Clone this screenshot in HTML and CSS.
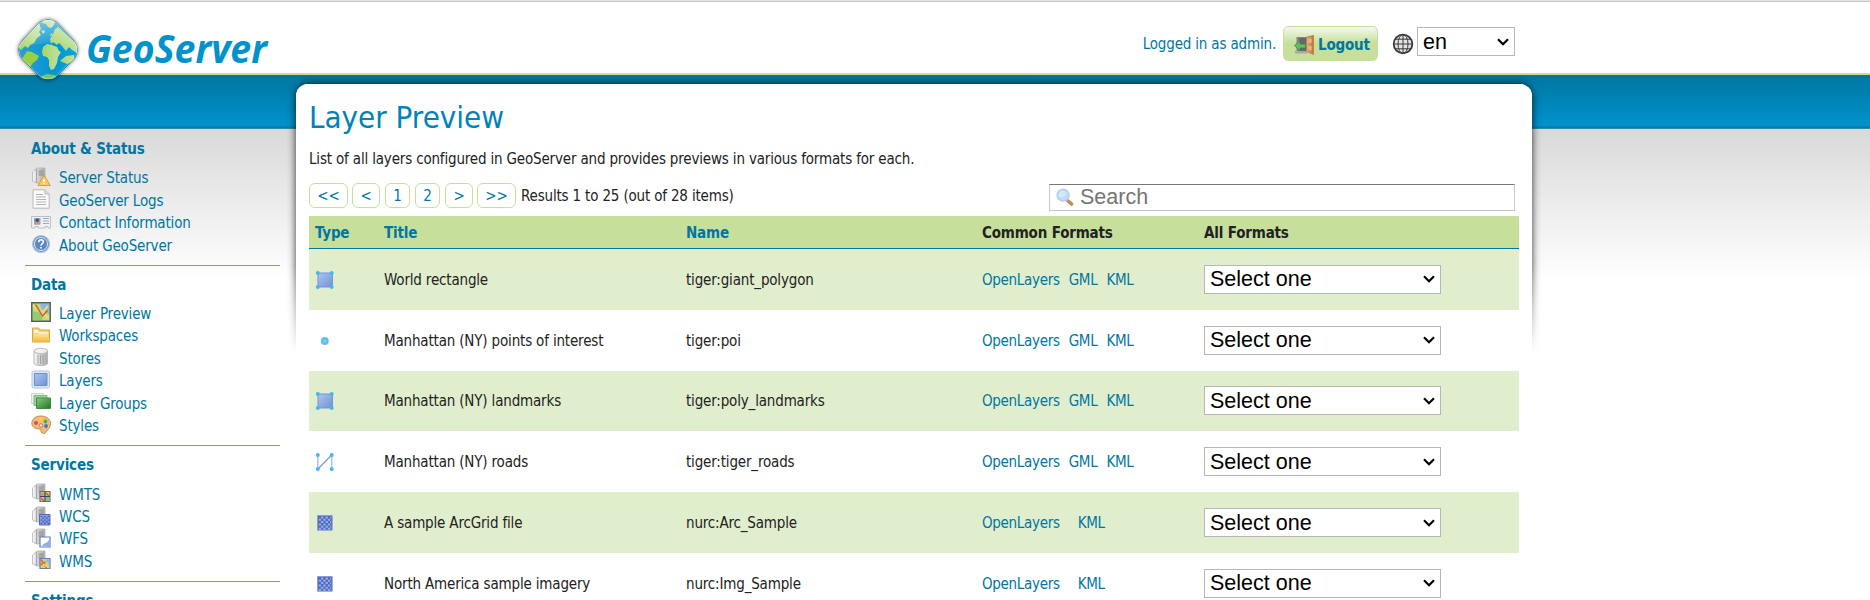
FILE: index.html
```html
<!DOCTYPE html>
<html lang="en">
<head>
<meta charset="utf-8">
<title>GeoServer: Layer Preview</title>
<link rel="stylesheet" href="styles.css">
</head>
<body>
<svg class="defs" width="0" height="0" aria-hidden="true">
  <defs>
    <linearGradient id="gPoly" x1="0" y1="0" x2="1" y2="1"><stop offset="0" stop-color="#abc6ee"/><stop offset="1" stop-color="#6f92d8"/></linearGradient>
    <linearGradient id="gSrv" x1="0" y1="0" x2="1" y2="0"><stop offset="0" stop-color="#fafafa"/><stop offset=".4" stop-color="#d8d8d8"/><stop offset="1" stop-color="#a9a9a9"/></linearGradient>
    <linearGradient id="gGrp" x1="0" y1="0" x2="1" y2="1"><stop offset="0" stop-color="#8cc98a"/><stop offset="1" stop-color="#1f7a1c"/></linearGradient>
    <linearGradient id="gFold" x1="0" y1="0" x2="0" y2="1"><stop offset="0" stop-color="#fdeeb0"/><stop offset="1" stop-color="#f2bd3e"/></linearGradient>
    <linearGradient id="gDoor" x1="0" y1="0" x2="1" y2="0"><stop offset="0" stop-color="#e6b07a"/><stop offset="1" stop-color="#b8733e"/></linearGradient>
    <linearGradient id="gSea" x1="0" y1="0" x2="1" y2="0"><stop offset="0" stop-color="#2f9fd0"/><stop offset=".6" stop-color="#0095d4"/><stop offset="1" stop-color="#00a8e0"/></linearGradient>
    <linearGradient id="gLand" x1="0" y1="0" x2="1" y2="0"><stop offset="0" stop-color="#a8d468"/><stop offset="1" stop-color="#c3e2a0"/></linearGradient>
    <linearGradient id="gGloss" x1="0" y1="0" x2="0" y2="1"><stop offset="0" stop-color="#fff" stop-opacity=".5"/><stop offset="1" stop-color="#fff" stop-opacity="0"/></linearGradient>
    <symbol id="server" viewBox="0 0 20 20"><path d="M1.500 5 6 1h8v15H6l-4.500-2z" fill="url(#gSrv)" stroke="#b3b3b3" stroke-width=".8"/><path d="M5.500 2v14" stroke="#a8a8a8" stroke-width="1.200"/><path d="M7.500 4h5M7.500 6h5M7.500 8h5" stroke="#888"/></symbol>
    <symbol id="status" viewBox="0 0 20 20"><use href="#server"/><path d="M13 8.200 19.200 18.500H7z" fill="#f8cc5c" stroke="#dc9a35" stroke-linejoin="round"/><path d="M13 12v3M13 16v1.200" stroke="#fff" stroke-width="1.500"/></symbol>
    <symbol id="logs" viewBox="0 0 20 20"><path d="M2 .8h12L18.200 5v14.200H2z" fill="#fafafa" stroke="#b8b8b8"/><path d="M14 1v4h4" fill="#ddd" stroke="#bbb"/><path d="M5 5.500h7M5 8h10M5 10.500h10M5 13h10M5 15.500h10" stroke="#b4b4b4"/></symbol>
    <symbol id="card" viewBox="0 0 20 20"><path d="M.6 4.500h19v11.500H17v-1.500h-3V16H7v-1.500H4V16H.6z" fill="#eef2f7" stroke="#b6bfcb"/><path d="M3 6h6.500v6.500H3z" fill="#7ba9dd"/><circle cx="6.200" cy="8.200" r="1.700" fill="#6e4326"/><path d="M3.500 12.500c0-3.500 5.500-3.500 5.500 0z" fill="#e59055"/><path d="M12 6.500h6M12 9h6M12 11.500h6" stroke="#a0a8b3"/></symbol>
    <symbol id="about" viewBox="0 0 20 20"><circle cx="10" cy="10" r="8.500" fill="#6f98cc" stroke="#b0c3df" stroke-width="1.200"/><circle cx="10" cy="10" r="6.500" fill="#5b87bf" stroke="#d9e5f3"/><path d="M7.700 8.200c0-3.500 5-3 4.700-.2C12.200 9.700 10 9.600 10 11.700M10 13v1.600" fill="none" stroke="#fff" stroke-width="1.600"/></symbol>
    <symbol id="preview" viewBox="0 0 20 20"><path d="M.8.800h18.400v18.400H.8z" fill="#bedb86" stroke="#536150" stroke-width="1.500"/><path d="M9 2h9v10L12 9z" fill="#89b3ee"/><path d="M2 9l7 2 3 7H2z" fill="#8fce6b"/><path d="M2 3.500 18 16M11 11l6-7" stroke="#f3dc65" stroke-width="2"/><path d="M4.500 2.500 11.500 14l5-5.500" fill="none" stroke="#e15b3c" stroke-width="1.500"/></symbol>
    <symbol id="folder" viewBox="0 0 20 20"><path d="M1.500 3h6l1.500 2h9.500v12h-17z" fill="#f5d46d" stroke="#dba63c"/><path d="M3 5h4v2h10v1H3z" fill="#fffbe2"/><path d="M3 9h5l1.500-1.500H17V16H3z" fill="url(#gFold)"/></symbol>
    <symbol id="store" viewBox="0 0 20 20"><path d="M3 4v12c0 3.500 13.500 3.500 13.500 0V4z" fill="url(#gSrv)" stroke="#b8b8b8"/><ellipse cx="9.800" cy="4" rx="6.700" ry="2.700" fill="#f1f1f1" stroke="#b8b8b8"/><path d="M7 8v9M9.500 8v9M12 8v9" stroke="#999" stroke-width=".8"/></symbol>
    <symbol id="layer" viewBox="0 0 20 20"><rect x="1" y="1" width="17.500" height="17" rx="1.500" fill="#dbe6f7" stroke="#b4c5e4"/><path d="M3.500 3.500h12.500v12H3.500z" fill="url(#gPoly)" stroke="#6e8ed0"/></symbol>
    <symbol id="group" viewBox="0 0 20 20"><path d="M.5 1.500h12v10H.5z" fill="#e5f4e4" stroke="#c5e0c5"/><path d="M3 3.500h13v10H3z" fill="#9fd09d" stroke="#80ba7e"/><path d="M5.500 6h14v10.500h-14z" fill="url(#gGrp)" stroke="#3c8e39"/></symbol>
    <symbol id="style" viewBox="0 0 20 20"><path d="M10 1c5 0 9.500 3 9.500 7.500S17 14 15 17c-2 3-5 1-5-1 0-3-3-1.500-6-3S.5 9 1 7c.700-3.500 4-6 9-6z" fill="#f0bb83" stroke="#c88849"/><circle cx="5" cy="8" r="2" fill="#e34b37"/><circle cx="10" cy="4.500" r="2" fill="#f9d436"/><circle cx="14.500" cy="6.500" r="1.900" fill="#54ad42"/><circle cx="15" cy="11" r="1.900" fill="#397cc2"/><circle cx="10" cy="10.500" r="1.700" fill="#fff" stroke="#b97940"/></symbol>
    <symbol id="wmts" viewBox="0 0 20 20"><use href="#server"/><path d="M9 8.500h10v10H9z" fill="#e8c75d" stroke="#566fae" stroke-width="1.200"/><path d="M10 9.500h3.500v3.500H10z" fill="#b8a0a0"/><path d="M15 14h3.500v4H15z" fill="#94c456"/><path d="M10 15l3 3M15 10l3 3" stroke="#df5838" stroke-width="1.500"/><path d="M14 8.500v10M9 13.500h10" stroke="#34476d" stroke-width="1.200"/></symbol>
    <symbol id="wcs" viewBox="0 0 20 20"><use href="#server"/><path d="M8.500 8.500h10.500v10.500H8.500z" fill="#8faae8" stroke="#5467bd"/><path d="M9.500 10.500h9M9.500 14h9M9.500 17.300h9" stroke="#4c60bd" stroke-width="1.700" stroke-dasharray="1.800 1.700"/><path d="M11.300 12.200h7M11.300 15.700h7" stroke="#4c60bd" stroke-width="1.700" stroke-dasharray="1.800 1.700"/></symbol>
    <symbol id="wfs" viewBox="0 0 20 20"><use href="#server"/><path d="M9 9h10v10H9z" fill="#fff" stroke="#647dc6" stroke-width="1.200"/><path d="M11 18.400c1-4 4-2 7.400-7v7z" fill="#8eb0e7"/></symbol>
    <symbol id="wms" viewBox="0 0 20 20"><use href="#server"/><path d="M9 8.500h10v10H9z" fill="#cbd77a" stroke="#6b79bd" stroke-width="1.200"/><path d="M14 9.500h4.500v5z" fill="#8fb6ee"/><path d="M10 9.500l6 9M9.500 15l5-3" stroke="#e06a3c" stroke-width="1.600"/><path d="M12 14l6 4" stroke="#f3dc65" stroke-width="1.500"/></symbol>
    <symbol id="polygon" viewBox="0 0 20 20"><path d="M3 3h14.500v14H3z" fill="url(#gPoly)" stroke="#7595d8"/><g fill="#45b6f2"><circle cx="2.800" cy="3" r="2"/><circle cx="16.700" cy="3" r="2"/><circle cx="2.800" cy="17" r="2"/><circle cx="16.700" cy="17" r="2"/></g></symbol>
    <symbol id="point" viewBox="0 0 20 20"><circle cx="9.800" cy="10" r="4" fill="#65c0f2"/><circle cx="9.800" cy="10" r="2" fill="#88d1f7" stroke="#4cafeb" stroke-width=".7"/></symbol>
    <symbol id="line" viewBox="0 0 20 20"><path d="M2.800 3v14L16.700 3v14" fill="none" stroke="#a9c7f0" stroke-width="1.600"/><path d="M3 17 16.700 3" stroke="#6f92d8"/><g fill="#45b6f7"><circle cx="2.800" cy="3" r="2"/><circle cx="16.700" cy="3" r="2"/><circle cx="2.800" cy="17" r="2"/><circle cx="16.700" cy="17" r="2"/></g></symbol>
    <symbol id="raster" viewBox="0 0 20 20"><path d="M2.500 2.500h14.700v14.700H2.500z" fill="#5369bd" stroke="#8e9bd0"/><path d="M6 4.500h10M6 9.100h10M6 13.700h10M3.700 6.800h12M3.700 11.400h12M3.700 15.800h12" stroke="#91b1ea" stroke-width="2" stroke-dasharray="2.300 2.300"/></symbol>
  </defs>
</svg>

<header class="header">
  <a class="logo" href="#">
    <svg width="270" height="90" viewBox="0 0 270 90">
      <defs><clipPath id="diamond"><path d="M40 22q8-5 16 0L74 41q7 9 0 18L56 77q-8 5-16 0L22 59q-7-9 0-18z"/></clipPath></defs>
      <path class="logo-shadow" d="M40 22q8-5 16 0L74 41q7 9 0 18L56 77q-8 5-16 0L22 59q-7-9 0-18z"/>
      <g clip-path="url(#diamond)">
        <path d="M16 16h64v66H16z" fill="url(#gSea)"/>
        <g fill="url(#gLand)">
          <path d="M18 46 39 23l2 6-2 3 2 3-4 3-3 5-4 2-2 3-3-2-4 4z"/>
          <path d="M27 51l5 1 7 4-2 4-4 3-3 4-8-8z" fill="#98cf45"/>
          <path d="M43 20h12l-1 5-3 3-3-1-2-3-4-1z"/>
          <path d="M50 39l3-5 2-5 3-2 20 18-1 8-5-3-3-3-3 4-4-5-3-3-2 2-4-3-2 2z"/>
          <path d="M43 47l4-3 5 1 5 2 2 4 2 1-3 5-1 6-3 6-3 1-2-4v-6l-2-3-4-1-1-4z"/>
          <path d="M60 61l6-5 8-1v6l-7 3z"/>
          <path d="M42 76l5-2 8 1 2 4H40z" fill="#71c56f"/>
        </g>
        <path d="M41 31l3-1 1 2-2 2zM50 36l1-3 2 2z" fill="#b8dd8e"/>
        <path d="M16 16h64v30q-30-8-64 4z" fill="url(#gGloss)"/>
      </g>
      <path d="M40 23q8-5 16 0L74 42q6 8 0 16L56 76q-8 5-16 0L22 58q-6-8 0-16z" fill="none" stroke="#fff" stroke-opacity=".3"/>
      <text class="logo-text" x="86" y="63" textLength="181" lengthAdjust="spacingAndGlyphs">GeoServer</text>
    </svg>
  </a>
  <div class="session">
    <span class="user">Logged in as admin.</span>
    <a class="logout" href="#">
      <svg width="20" height="20" viewBox="0 0 20 20"><path d="M2.500 2h13v14h-13z" fill="#858585"/><path d="M5 3h7v13H5z" fill="#686868"/><path d="M1 16h12v2.500H1z" fill="#aaa"/><path d="M12.500 2 19.500.5v19l-7-3z" fill="url(#gDoor)" stroke="#bb7640" stroke-width=".7"/><path d="M14.300 4l3.300-.7v4.500h-3.300zM14.300 11h3.300v4.500l-3.300-1z" fill="#e8b786"/><path d="M.5 10.500 6 6v3h5.500v4H6v3z" fill="#64bd68" stroke="#36873b" stroke-width=".8"/></svg>
      <span>Logout</span>
    </a>
    <svg class="globe" width="22" height="22" viewBox="0 0 22 22" fill="none" stroke="#3a3a3a"><circle cx="11" cy="11" r="9.300" stroke-width="1.800" fill="#e4e4e4"/><ellipse cx="11" cy="11" rx="5" ry="9.500"/><path d="M11 1.500v19M1.500 11h19M3 6.200h16M3 15.800h16"/></svg>
    <select class="lang" aria-label="Language"><option>en</option></select>
  </div>
</header>

<div class="page">
  <nav class="sidebar">
    <section>
      <h2>About &amp; Status</h2>
      <ul>
        <li><svg><use href="#status"/></svg><a>Server Status</a></li>
        <li><svg><use href="#logs"/></svg><a>GeoServer Logs</a></li>
        <li><svg><use href="#card"/></svg><a>Contact Information</a></li>
        <li><svg><use href="#about"/></svg><a>About GeoServer</a></li>
      </ul>
    </section>
    <section>
      <h2>Data</h2>
      <ul>
        <li><svg><use href="#preview"/></svg><a>Layer Preview</a></li>
        <li><svg><use href="#folder"/></svg><a>Workspaces</a></li>
        <li><svg><use href="#store"/></svg><a>Stores</a></li>
        <li><svg><use href="#layer"/></svg><a>Layers</a></li>
        <li><svg><use href="#group"/></svg><a>Layer Groups</a></li>
        <li><svg><use href="#style"/></svg><a>Styles</a></li>
      </ul>
    </section>
    <section>
      <h2>Services</h2>
      <ul>
        <li><svg><use href="#wmts"/></svg><a>WMTS</a></li>
        <li><svg><use href="#wcs"/></svg><a>WCS</a></li>
        <li><svg><use href="#wfs"/></svg><a>WFS</a></li>
        <li><svg><use href="#wms"/></svg><a>WMS</a></li>
      </ul>
    </section>
    <section>
      <h2>Settings</h2>
    </section>
  </nav>

  <main class="panel">
    <h1>Layer Preview</h1>
    <p class="intro">List of all layers configured in GeoServer and provides previews in various formats for each.</p>
    <div class="toolbar">
      <div class="pager">
        <a class="wide">&lt;&lt;</a><a class="mid">&lt;</a><a>1</a><a>2</a><a class="mid next">&gt;</a><a class="wide last">&gt;&gt;</a>
        <span class="results">Results 1 to 25 (out of 28 items)</span>
      </div>
      <label class="search">
        <svg width="18" height="19" viewBox="0 0 19 20"><path d="M12.500 13.500l4 3.500" stroke="#c78c54" stroke-width="3.600" stroke-linecap="round"/><circle cx="7.500" cy="7.500" r="6.300" fill="#bddcf6" stroke="#b4cdec" stroke-width="1.500"/><circle cx="6.500" cy="6.500" r="3.500" fill="#d3e8fa"/></svg>
        <input type="text" placeholder="Search">
      </label>
    </div>
    <table class="layers">
      <thead><tr><th class="c-type">Type</th><th class="c-title">Title</th><th class="c-name">Name</th><th class="c-common plain">Common Formats</th><th class="plain">All Formats</th></tr></thead>
      <tbody>
        <tr><td><svg><use href="#polygon"/></svg></td><td>World rectangle</td><td>tiger:giant_polygon</td><td><span class="links"><a>OpenLayers</a><a>GML</a><a>KML</a></span></td><td><select><option>Select one</option></select></td></tr>
        <tr><td><svg><use href="#point"/></svg></td><td>Manhattan (NY) points of interest</td><td>tiger:poi</td><td><span class="links"><a>OpenLayers</a><a>GML</a><a>KML</a></span></td><td><select><option>Select one</option></select></td></tr>
        <tr><td><svg><use href="#polygon"/></svg></td><td>Manhattan (NY) landmarks</td><td>tiger:poly_landmarks</td><td><span class="links"><a>OpenLayers</a><a>GML</a><a>KML</a></span></td><td><select><option>Select one</option></select></td></tr>
        <tr><td><svg><use href="#line"/></svg></td><td>Manhattan (NY) roads</td><td>tiger:tiger_roads</td><td><span class="links"><a>OpenLayers</a><a>GML</a><a>KML</a></span></td><td><select><option>Select one</option></select></td></tr>
        <tr><td><svg><use href="#raster"/></svg></td><td>A sample ArcGrid file</td><td>nurc:Arc_Sample</td><td><span class="links raster"><a>OpenLayers</a><a>KML</a></span></td><td><select><option>Select one</option></select></td></tr>
        <tr><td><svg><use href="#raster"/></svg></td><td>North America sample imagery</td><td>nurc:Img_Sample</td><td><span class="links raster"><a>OpenLayers</a><a>KML</a></span></td><td><select><option>Select one</option></select></td></tr>
      </tbody>
    </table>
  </main>
</div>
</body>
</html>
```

FILE: styles.css
```css
* { box-sizing: border-box; }
html, body { margin: 0; height: 600px; overflow: hidden; }
body {
  font: 15px/22px Tahoma, "DejaVu Sans Condensed", "DejaVu Sans", sans-serif;
  font-stretch: condensed;
  letter-spacing: -0.17px;
  color: #222;
  background: #fff;
  display: flex;
  flex-direction: column;
}
.defs { position: absolute; }
a { color: #0076a1; text-decoration: none; }
h1, h2, p, ul { margin: 0; padding: 0; font-weight: normal; }
ul { list-style: none; }
select {
  appearance: none;
  font: 21.500px "Liberation Sans", Arial, sans-serif;
  letter-spacing: 0;
  color: #000;
  background: #fff url("data:image/svg+xml,%3Csvg xmlns='http://www.w3.org/2000/svg' width='12' height='8'%3E%3Cpath d='M1 1.300 6 6.300 11 1.300' fill='none' stroke='%23000' stroke-width='2.200'/%3E%3C/svg%3E") no-repeat right 5px center;
  border: 1px solid #b6b6b6;
  border-radius: 0;
  padding: 0 0 0 5px;
  height: 29px;
}

.header {
  flex: none;
  height: 75px;
  border-top: 1px solid #e6e6e6;
  border-bottom: 2px solid #c6df9b;
  box-shadow: inset 0 1px #c4c4c4;
  display: flex;
  justify-content: space-between;
  padding-right: 355px;
  position: relative;
  z-index: 1;
}
.logo { height: 72px; margin-top: -1px; }
.logo svg { display: block; overflow: visible; }
.logo-shadow { fill: #333; filter: drop-shadow(0 0 2px rgba(0,0,0,.7)); }
.logo-text { font: italic bold 40px "Open Sans", "Noto Sans", sans-serif; letter-spacing: 0; fill: #0092cb; }
.session { display: flex; align-items: flex-start; padding-top: 25px; }
.user { color: #0076a1; padding-top: 7px; margin-right: 7px; }
.logout {
  display: flex; align-items: center; gap: 4px;
  width: 95px; height: 35px; padding: 3px 0 0 10px;
  border: 1px solid #c6df9b; border-radius: 5px;
  background: linear-gradient(#f4f9eb, #c6df9b 50%);
  font-weight: bold;
}
.globe { margin: 7px 3px 0 14px; }
.lang { width: 98px; margin-top: 1px; }

.page {
  flex: 1; min-height: 0;
  display: flex; align-items: flex-start;
  isolation: isolate;
  background:
    linear-gradient(#0076a1, #0092cb 50px, #0092cb 51px, #0076a1 52px, #3f8fac 54px) 0 0 / 100% 54px no-repeat,
    linear-gradient(#d9d9d9, #fff 150px) 0 54px / 100% 160px no-repeat;
}
.sidebar { width: 255px; margin: 63px 16px 0 25px; }
.sidebar section { border-bottom: 1px solid #8b9c78; padding: 0 0 8px 6px; margin-bottom: 8px; }
.sidebar section:last-child { border: 0; }
.sidebar h2 { font-size: 15px; line-height: 22px; font-weight: bold; color: #0076a1; margin-bottom: 7px; }
.sidebar li { display: flex; align-items: center; height: 22.450px; }
.sidebar svg { width: 20px; height: 20px; margin: -3px 8px 0 0; flex: none; }

.panel {
  position: relative;
  width: 1236px; height: 516px; margin-top: 9px;
  padding: 0 13px;
  border-radius: 12px 12px 0 0;
  background: #fff;
}
/* Soft shadow round the top of the panel, fading out down its sides */
.panel::before {
  content: "";
  position: absolute; z-index: -1; inset: -9px -12px auto; height: 281px;
  padding: 9px 12px 0;
  border-radius: 24px 24px 0 0;
  background: rgba(0,0,0,.8) content-box;
  background-clip: content-box;
  filter: blur(4px);
  mask-image: linear-gradient(#000 190px, transparent 278px);
}
.panel::after {
  content: "";
  position: absolute; z-index: -1; inset: 0;
  border-radius: 12px 12px 0 0;
  background: #fff;
}
.panel h1 { font-size: 31px; line-height: 36px; color: #0083b8; padding-top: 15px; letter-spacing: 0; }
.intro { padding-top: 13px; }
.toolbar { display: flex; justify-content: space-between; margin-top: 13px; padding-right: 4px; height: 33px; }
.pager { display: flex; height: 25px; }
.pager a { width: 25px; height: 25px; border: 1px solid #c6df9b; border-radius: 6px; text-align: center; line-height: 25px; margin-right: 5px; }
.pager .mid { width: 28px; }
.pager .next { margin-right: 4px; }
.pager .wide { width: 39px; margin-right: 4px; }
.pager .last { margin-right: 5px; }
.results { line-height: 27px; }
.search { display: flex; align-items: center; width: 466px; height: 27px; margin-top: 1px; border: 1px solid #c8c8c8; border-top-color: #777; padding-left: 6px; }
.search svg { flex: none; }
.search input { border: 0; outline: 0; padding: 0 0 0 6px; font: 21.500px "Liberation Sans", Arial, sans-serif; height: 25px; width: 420px; background: transparent; }
.search input::placeholder { color: #757575; }

.layers { width: 1210px; border-collapse: separate; border-spacing: 0; table-layout: fixed; }
.layers th { height: 33px; padding: 1px 0 0 6px; text-align: left; background: #c6df9b; border-bottom: 1px solid #0076a1; color: #0076a1; }
.layers th.plain { color: #222; }
.layers td { height: 60.800px; padding: 1px 0 0 6px; }
.layers td:last-child { padding-top: 0; }
.layers tbody tr:nth-child(odd) { background: #e1eecd; }
.c-type { width: 69px; }
.c-title { width: 302px; }
.c-name { width: 296px; }
.c-common { width: 222px; }
.layers svg { display: block; width: 20px; height: 20px; }
.layers select { display: block; width: 237px; }
.links { display: flex; gap: 9px; letter-spacing: -0.3px; }
.links.raster { gap: 18px; }
```
